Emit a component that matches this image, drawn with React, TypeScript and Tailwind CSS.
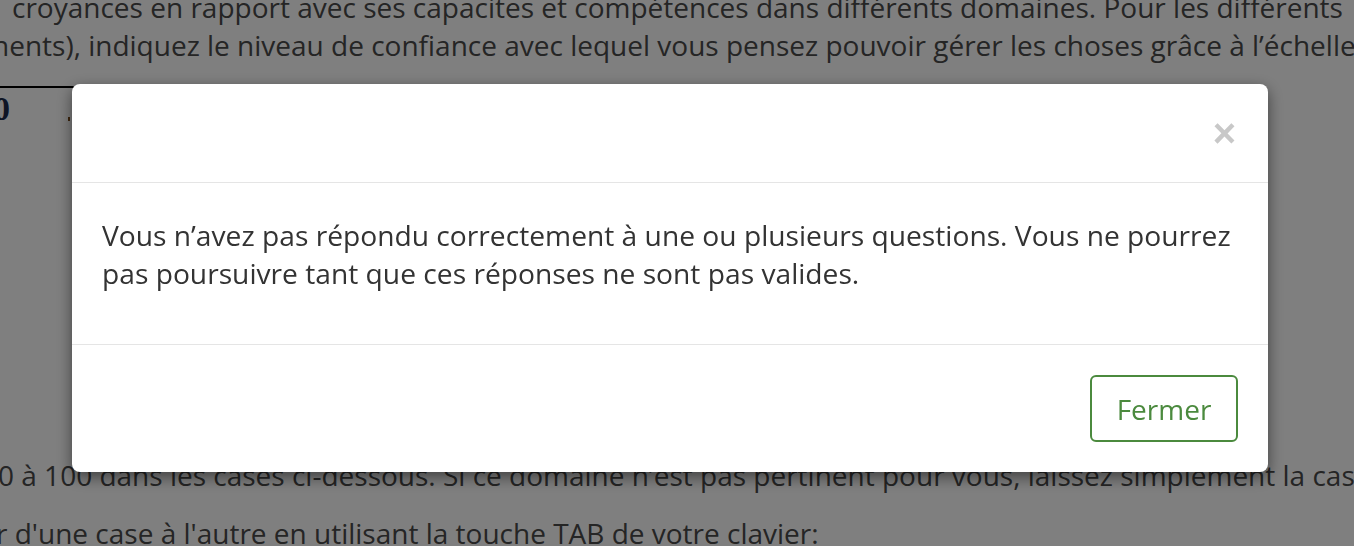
function PageBehind() {
  return (
    <div className="font-['Open_Sans',sans-serif] text-[#4a4a4a] text-[28px] leading-[38px] whitespace-nowrap">
      <p className="-mt-[12px] ml-[12px]">
        croyances en rapport avec ses capacites et compétences dans différents domaines. Pour les différents
      </p>
      <p className="-ml-[8px]">
        nents), indiquez le niveau de confiance avec lequel vous pensez pouvoir gérer les choses grâce à l’échelle
      </p>

      {/* tableau partiellement visible */}
      <div className="mt-[22px] w-[400px] h-[370px] border-t-2 border-black">
        <div className="flex items-start pt-[2px]">
          <span className="-ml-[7px] font-['Liberation_Serif',serif] font-bold text-[34px] leading-[38px] text-[#1c2a4a]">
            0
          </span>
          <span className="ml-[58px] mt-[27px] h-[4px] w-[2px] bg-[#7a4a1a]" />
        </div>
      </div>

      <p className="-ml-[2px]">
        0 à 100 dans les cases ci-dessous. Si ce domaine n’est pas pertinent pour vous, laissez simplement la case vide.
      </p>
      <p className="mt-[20px] -ml-[4px]">r d'une case à l'autre en utilisant la touche TAB de votre clavier:</p>
    </div>
  );
}

function ErrorModal() {
  return (
    <div className="fixed inset-0 bg-black/50">
      <div className="ml-[72px] mt-[84px] w-[1196px] rounded-[8px] bg-white shadow-[0_5px_15px_rgba(0,0,0,0.5)] font-['Open_Sans',sans-serif]">
        {/* en-tête */}
        <div className="flex justify-end border-b border-[#e5e5e5] px-[30px] py-[30px]">
          <button className="mr-[2px] h-[38px] font-['Liberation_Sans',sans-serif] text-[40px] font-bold leading-[36px] text-[#c8c8c8]">
            ×
          </button>
        </div>

        {/* contenu */}
        <div className="px-[30px] pt-[33px] pb-[52px] text-[28.2px] leading-[38px] text-[#333]">
          <p>
            Vous n’avez pas répondu correctement à une ou plusieurs questions. Vous ne pourrez pas poursuivre tant que
            ces réponses ne sont pas valides.
          </p>
        </div>

        {/* pied */}
        <div className="flex justify-end border-t border-[#e5e5e5] p-[30px]">
          <button className="h-[67px] w-[148px] rounded-[6px] border-2 border-[#4b8a3e] text-[28px] text-[#4b8a3e]">
            Fermer
          </button>
        </div>
      </div>
    </div>
  );
}

export default function App() {
  return (
    <div className="relative h-[546px] w-full overflow-hidden bg-white">
      <PageBehind />
      <ErrorModal />
    </div>
  );
}
